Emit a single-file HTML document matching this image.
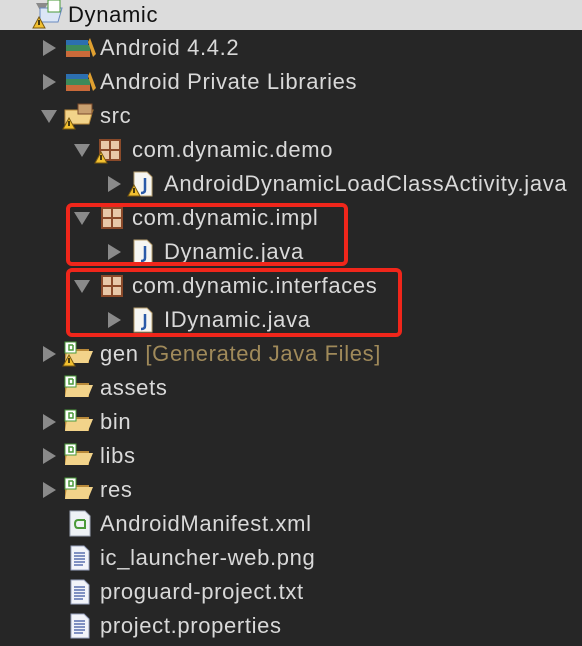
<!DOCTYPE html>
<html><head><meta charset="utf-8"><style>
body{margin:0;width:582px;height:646px;background:#262626;overflow:hidden;font-family:"Liberation Sans",sans-serif;font-size:22px;letter-spacing:0.65px;color:#d9d9d9;position:relative}
.hdr{position:absolute;left:0;top:0;width:582px;height:30px;background:#dcdcdc}
.t{position:absolute;line-height:24px;white-space:nowrap}
.a{position:absolute;width:0;height:0}
.ar{border-top:8px solid transparent;border-bottom:8px solid transparent;border-left:13px solid #8a8a8a}
.ad{border-left:8px solid transparent;border-right:8px solid transparent;border-top:13px solid #8a8a8a}
.box{position:absolute;border:4px solid #f0261b;border-radius:6px;box-sizing:border-box}
</style></head><body>
<div class="hdr"></div>
<svg width="582" height="646" style="position:absolute;left:0;top:0">
<defs>
<g id="books"><rect x="0" y="2" width="22" height="5" fill="#2c6fb0"/><rect x="0" y="7" width="24" height="6" fill="#3d8a5a"/><rect x="0" y="13" width="24" height="6" fill="#c96a3a"/><path d="M24 0 L30 16 L27 19 L22 4Z" fill="#e0a030"/></g>
<g id="folder"><path d="M1 4 h8 l2 3 h14 v14 h-24z" fill="#b98a3a"/><path d="M3 9 h26 l-5 12 h-23z" fill="#f2d38a"/><rect x="1" y="0" width="11" height="11" fill="#fff" stroke="#4a9a3a"/><path d="M9 3 h-4 v5 h4 v-5" fill="none" stroke="#4a9a3a" stroke-width="1.5"/></g>
<g id="pkg"><rect x="0" y="0" width="20" height="20" fill="#e8c8a8" stroke="#8a4a2a" stroke-width="2"/><path d="M10 0v20M0 10h20" stroke="#8a4a2a" stroke-width="2"/></g>
<g id="java"><path d="M0 0 h13 l5 5 v19 h-18z" fill="#f6f6f2" stroke="#b8a070"/><path d="M11 6 v12 q0 3 -4 3" fill="none" stroke="#2a5aa8" stroke-width="2.5"/></g>
<g id="doc"><path d="M0 0 h13 l5 5 v19 h-18z" fill="#f2f4fa" stroke="#9aa4c0"/><path d="M3 7h11M3 10h11M3 13h11M3 16h11M3 19h9" stroke="#5a70b0" stroke-width="1.5"/></g>
<g id="warn"><path d="M6 0 L12 11 H0Z" fill="#f2c030" stroke="#7a5a10"/><rect x="5.3" y="3" width="1.4" height="5" fill="#000"/></g>
</defs>
<path d="M36 3 L48 3 L42 14Z" fill="#8a8a8a"/>
<path d="M40 8 h22 l-4 14 h-18z" fill="#dbe6f6" stroke="#6a8ac0"/><rect x="48" y="0" width="12" height="12" fill="#fff" stroke="#4a9a3a"/><use href="#warn" x="33" y="17"/>
<use href="#books" x="66" y="38"/><use href="#books" x="66" y="72"/>
<g transform="translate(64,104)"><path d="M1 6h28l-4 14h-24z" fill="#f2d38a" stroke="#b98a3a"/><rect x="14" y="0" width="14" height="10" fill="#c8a070" stroke="#7a4a2a"/></g><use href="#warn" x="63" y="118"/>
<use href="#pkg" x="100" y="140"/><use href="#warn" x="95" y="152"/>
<use href="#java" x="134" y="172"/><use href="#warn" x="128" y="185"/>
<use href="#pkg" x="102" y="208"/><use href="#java" x="134" y="240"/>
<use href="#pkg" x="102" y="276"/><use href="#java" x="134" y="308"/>
<use href="#folder" x="64" y="342"/><use href="#warn" x="63" y="355"/>
<use href="#folder" x="64" y="376"/><use href="#folder" x="64" y="410"/><use href="#folder" x="64" y="444"/><use href="#folder" x="64" y="478"/>
<g transform="translate(70,511)"><path d="M0 0 h15 l5 5 v20 h-20z" fill="#eef2f6" stroke="#a0a8b8"/><path d="M15 9 h-7 q-3 0 -3 4 q0 4 3 4 h7 v-8" fill="none" stroke="#4a9a3a" stroke-width="2"/></g>
<use href="#doc" x="71" y="546"/><use href="#doc" x="71" y="580"/><use href="#doc" x="71" y="614"/>
</svg>
<div class="a ar" style="left:43px;top:40px"></div>
<div class="a ar" style="left:43px;top:74px"></div>
<div class="a ad" style="left:41px;top:110px"></div>
<div class="a ad" style="left:74px;top:144px"></div>
<div class="a ar" style="left:108px;top:176px"></div>
<div class="a ad" style="left:74px;top:212px"></div>
<div class="a ar" style="left:108px;top:244px"></div>
<div class="a ad" style="left:74px;top:280px"></div>
<div class="a ar" style="left:108px;top:312px"></div>
<div class="a ar" style="left:43px;top:346px"></div>
<div class="a ar" style="left:43px;top:414px"></div>
<div class="a ar" style="left:43px;top:448px"></div>
<div class="a ar" style="left:43px;top:482px"></div>
<div class="t" style="left:68px;top:3px;color:#111">Dynamic</div>
<div class="t" style="left:100px;top:36px">Android 4.4.2</div>
<div class="t" style="left:100px;top:70px">Android Private Libraries</div>
<div class="t" style="left:100px;top:104px">src</div>
<div class="t" style="left:132px;top:138px">com.dynamic.demo</div>
<div class="t" style="left:164px;top:172px">AndroidDynamicLoadClassActivity.java</div>
<div class="t" style="left:132px;top:206px">com.dynamic.impl</div>
<div class="t" style="left:164px;top:240px">Dynamic.java</div>
<div class="t" style="left:132px;top:274px">com.dynamic.interfaces</div>
<div class="t" style="left:164px;top:308px">IDynamic.java</div>
<div class="t" style="left:100px;top:342px">gen <span style="color:#a08a5a">[Generated Java Files]</span></div>
<div class="t" style="left:100px;top:376px">assets</div>
<div class="t" style="left:100px;top:410px">bin</div>
<div class="t" style="left:100px;top:444px">libs</div>
<div class="t" style="left:100px;top:478px">res</div>
<div class="t" style="left:100px;top:512px">AndroidManifest.xml</div>
<div class="t" style="left:100px;top:546px">ic_launcher-web.png</div>
<div class="t" style="left:100px;top:580px">proguard-project.txt</div>
<div class="t" style="left:100px;top:614px">project.properties</div>
<div class="box" style="left:66px;top:203px;width:282px;height:63px"></div>
<div class="box" style="left:66px;top:268px;width:336px;height:69px"></div>
</body></html>
